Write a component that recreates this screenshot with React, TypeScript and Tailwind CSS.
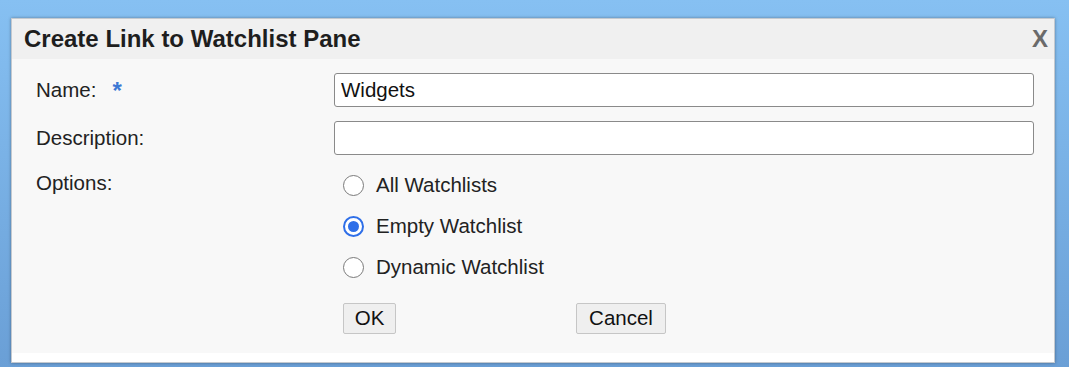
import { useState } from 'react';

// Create Link to Watchlist Pane dialog

const FONT = { fontFamily: '"Liberation Sans", Arial, sans-serif' };

function Radio({ label, checked, onClick }: { label: string; checked: boolean; onClick: () => void }) {
  return (
    <div className="flex h-[41px] items-center cursor-pointer" onClick={onClick}>
      <div className="ml-[9px] mr-[12px] w-[21px] h-[21px] rounded-full flex items-center justify-center">
        {checked ? (
          <div className="w-[21px] h-[21px] rounded-full border-[2px] border-[#2f6fe8] bg-white flex items-center justify-center">
            <div className="w-[11px] h-[11px] rounded-full bg-[#2f6fe8]" />
          </div>
        ) : (
          <div className="w-[21px] h-[21px] rounded-full border-[1.5px] border-[#7a7a7a] bg-white" />
        )}
      </div>
      <span className="text-[20.5px] text-[#222]">{label}</span>
    </div>
  );
}

export default function App() {
  const [option, setOption] = useState('empty');
  const [name, setName] = useState('Widgets');
  const [desc, setDesc] = useState('');

  return (
    <div
      className="w-[1069px] h-[367px] flex bg-gradient-to-b from-[#86c0f2] to-[#6a9fd6] pt-[18px] pl-[11px] pr-[14px] pb-[4px]"
      style={FONT}
    >
      <div className="flex-1 flex flex-col border border-[#c4c9cf] bg-white shadow-[0_0_3px_rgba(0,0,0,0.35)]">
        {/* Title bar */}
        <div className="h-[40px] bg-[#f0f0f0] flex items-center justify-between pl-[12px] pr-[6px]">
          <span className="text-[24px] font-bold text-[#1e1e1e] leading-none">Create Link to Watchlist Pane</span>
          <span className="text-[24px] font-bold text-[#6a6a6a] leading-none">X</span>
        </div>

        {/* Body */}
        <div className="flex-1 bg-[#f8f8f8] flex flex-col pl-[24px] pr-[20px] pt-[14px]">
          <div className="flex items-center h-[34px]">
            <div className="w-[298px] flex items-center text-[20.5px] text-[#222]">
              <span>Name:</span>
              <span className="ml-[16px] text-[24px] font-bold text-[#3d78d4] leading-none mt-[2px]">*</span>
            </div>
            <input
              value={name}
              onChange={e => setName(e.target.value)}
              className="flex-1 h-[34px] bg-white border-[1.5px] border-[#8a8a8a] rounded-[3px] px-[6px] text-[20.5px] text-[#111] outline-none"
            />
          </div>

          <div className="flex items-center h-[34px] mt-[14px]">
            <div className="w-[298px] text-[20.5px] text-[#222]">Description:</div>
            <input
              value={desc}
              onChange={e => setDesc(e.target.value)}
              className="flex-1 h-[34px] bg-white border-[1.5px] border-[#8a8a8a] rounded-[3px] px-[6px] text-[20.5px] text-[#111] outline-none"
            />
          </div>

          <div className="flex mt-[10px]">
            <div className="w-[298px] h-[37px] flex items-center text-[20.5px] text-[#222]">Options:</div>
            <div className="flex flex-col">
              <Radio label="All Watchlists" checked={option === 'all'} onClick={() => setOption('all')} />
              <Radio label="Empty Watchlist" checked={option === 'empty'} onClick={() => setOption('empty')} />
              <Radio label="Dynamic Watchlist" checked={option === 'dynamic'} onClick={() => setOption('dynamic')} />
              <div className="flex mt-[15px] ml-[9px]">
                <button className="w-[53px] h-[31px] bg-[#efefef] border border-[#c6c6c6] rounded-[2px] text-[20.5px] text-[#111] leading-none">
                  OK
                </button>
                <button className="ml-[180px] w-[90px] h-[31px] bg-[#efefef] border border-[#c6c6c6] rounded-[2px] text-[20.5px] text-[#111] leading-none">
                  Cancel
                </button>
              </div>
            </div>
          </div>
        </div>
        <div className="h-[9px] bg-white" />
      </div>
    </div>
  );
}
